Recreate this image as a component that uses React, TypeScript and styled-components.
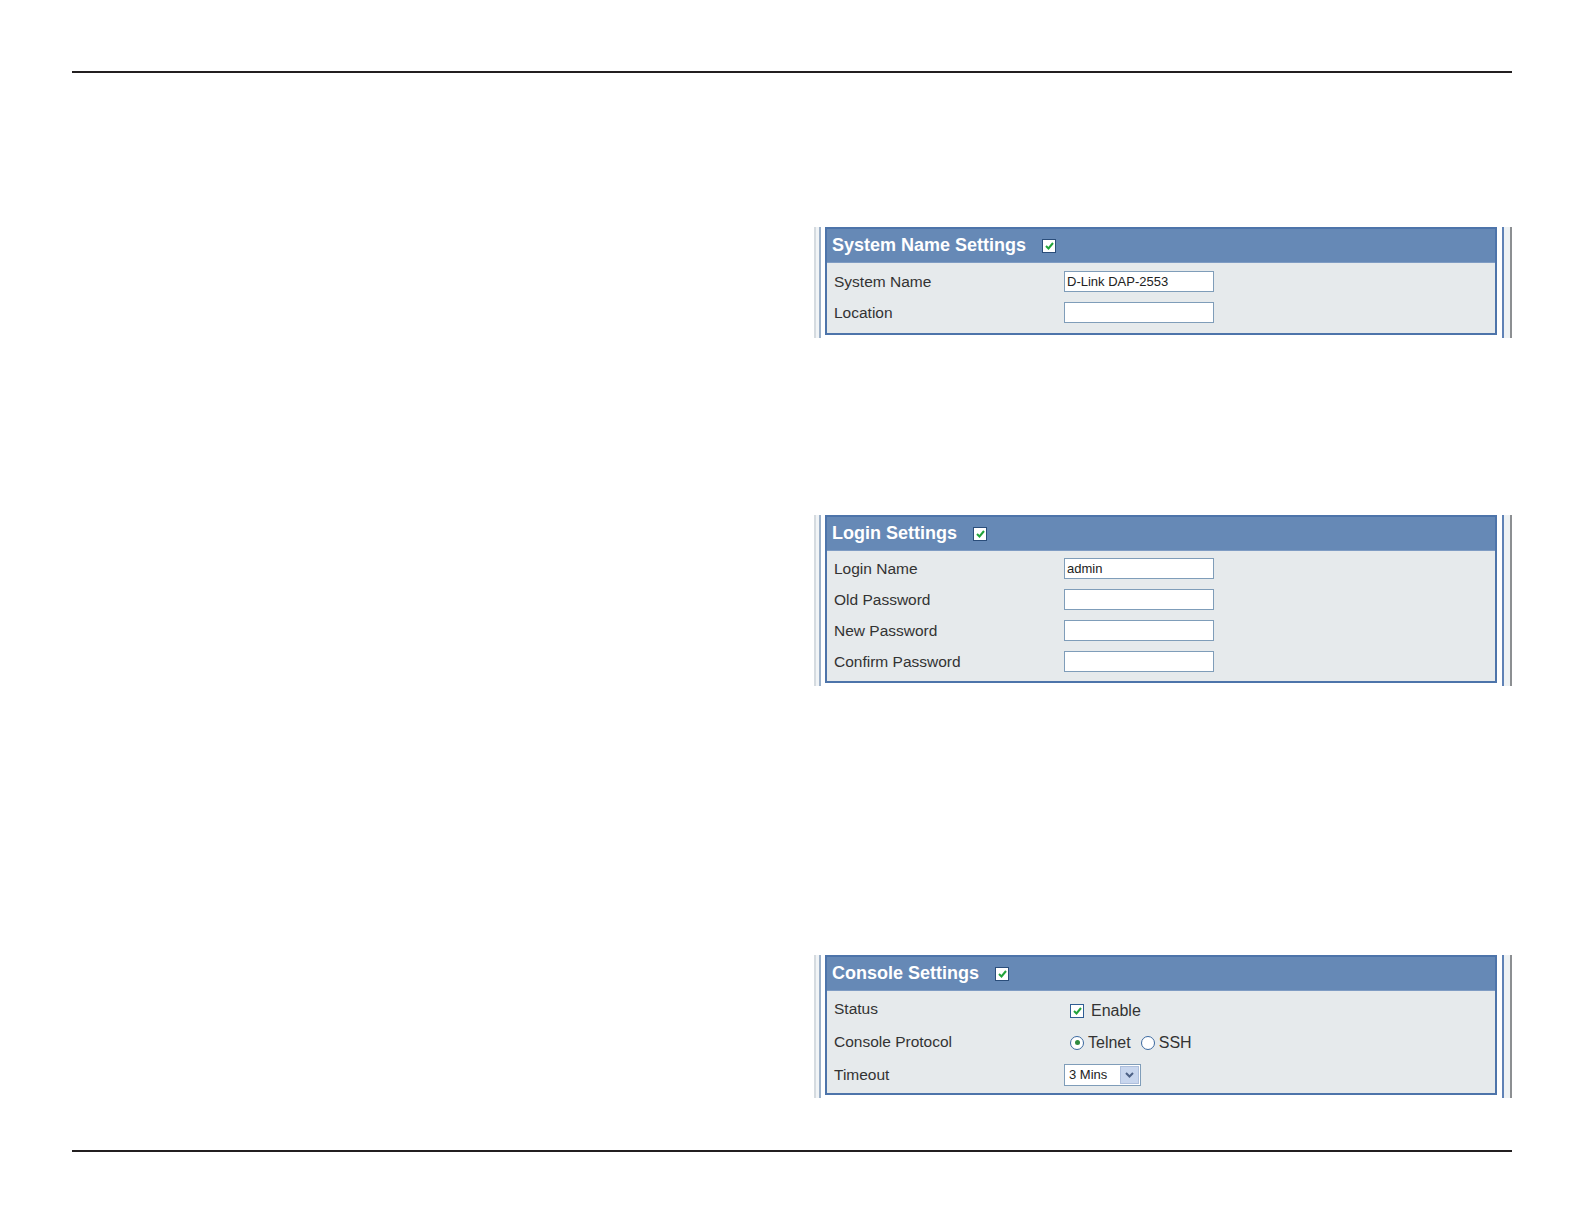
import React from 'react';
import styled, { createGlobalStyle } from 'styled-components';

const GlobalStyle = createGlobalStyle`
  body {
    margin: 0;
    background: #ffffff;
    font-family: "Liberation Sans", Arial, sans-serif;
  }

  * {
    box-sizing: border-box;
  }
`;

const CheckMark: React.FC = () => (
  <svg width="9" height="8" viewBox="0 0 9 8">
    <path d="M1 4 L3.5 6.5 L8 1" fill="none" stroke="#21a33a" strokeWidth="2" />
  </svg>
);

const App: React.FC = () => {
  return (
    <>
      <GlobalStyle />
      <Page>
        <Rule />
        <Column>
          <Frame $top={154}>
            <LeftRail />
            <Panel>
              <PanelHeader>
                <Title>System Name Settings</Title>
                <Box $header>
                  <CheckMark />
                </Box>
              </PanelHeader>
              <Body $top={3} $bottom={5}>
                <Row $h={31}>
                  <Label>System Name</Label>
                  <TextBox value="D-Link DAP-2553" readOnly />
                </Row>
                <Row $h={31}>
                  <Label>Location</Label>
                  <TextBox value="" readOnly />
                </Row>
              </Body>
            </Panel>
            <RightRail />
          </Frame>

          <Frame $top={177}>
            <LeftRail />
            <Panel>
              <PanelHeader>
                <Title>Login Settings</Title>
                <Box $header>
                  <CheckMark />
                </Box>
              </PanelHeader>
              <Body $top={2} $bottom={4}>
                <Row $h={31}>
                  <Label>Login Name</Label>
                  <TextBox value="admin" readOnly />
                </Row>
                <Row $h={31}>
                  <Label>Old Password</Label>
                  <TextBox value="" readOnly />
                </Row>
                <Row $h={31}>
                  <Label>New Password</Label>
                  <TextBox value="" readOnly />
                </Row>
                <Row $h={31}>
                  <Label>Confirm Password</Label>
                  <TextBox value="" readOnly />
                </Row>
              </Body>
            </Panel>
            <RightRail />
          </Frame>

          <Frame $top={269}>
            <LeftRail />
            <Panel>
              <PanelHeader>
                <Title>Console Settings</Title>
                <Box $header>
                  <CheckMark />
                </Box>
              </PanelHeader>
              <Body $top={1} $bottom={2}>
                <Row $h={33}>
                  <Label>Status</Label>
                  <Options $shift={5}>
                    <Box>
                      <CheckMark />
                    </Box>
                    <OptionText>Enable</OptionText>
                  </Options>
                </Row>
                <Row $h={33}>
                  <Label>Console Protocol</Label>
                  <Options $shift={2}>
                    <Radio $on />
                    <OptionText $gap={4}>Telnet</OptionText>
                    <Radio />
                    <OptionText $gap={4}>SSH</OptionText>
                  </Options>
                </Row>
                <Row $h={33}>
                  <Label>Timeout</Label>
                  <Select>
                    <SelectValue>3 Mins</SelectValue>
                    <SelectButton>
                      <svg width="9" height="6" viewBox="0 0 9 6">
                        <path d="M1 1 L4.5 4.5 L8 1" fill="none" stroke="#4d6185" strokeWidth="2" />
                      </svg>
                    </SelectButton>
                  </Select>
                </Row>
              </Body>
            </Panel>
            <RightRail />
          </Frame>
        </Column>
        <Rule $top={52} />
      </Page>
    </>
  );
};

const Page = styled.div`
  width: 1585px;
  height: 1225px;
  padding: 71px 73px 0 72px;
  overflow: hidden;
`;

const Rule = styled.div<{ $top?: number }>`
  height: 2px;
  margin-top: ${(p) => p.$top ?? 0}px;
  background: #231f20;
`;

const Column = styled.div`
  margin-left: 742px;
  display: flex;
  flex-direction: column;
`;

const Frame = styled.section<{ $top: number }>`
  margin-top: ${(p) => p.$top}px;
  display: flex;
  align-items: stretch;
`;

const LeftRail = styled.div`
  width: 7px;
  margin-right: 4px;
  border-left: 2px solid #d5dbe0;
  border-right: 2px solid #9db1c9;
  background: #f1f4f6;
`;

const RightRail = styled.div`
  width: 10px;
  margin-left: 5px;
  border-left: 2px solid #5f82b6;
  border-right: 2px solid #8c8f92;
  background: #eef2f4;
`;

const Panel = styled.div`
  flex: 1;
  margin-bottom: 3px;
  border: 2px solid #4d74aa;
  background: #e6eaec;
`;

const PanelHeader = styled.div`
  height: 34px;
  padding-left: 5px;
  display: flex;
  align-items: center;
  background: #6689b6;
  border-bottom: 1px solid #7f9cc3;
`;

const Title = styled.h2`
  margin: 0;
  font-size: 18px;
  font-weight: bold;
  color: #ffffff;
`;

const Box = styled.span<{ $header?: boolean }>`
  width: 14px;
  height: 14px;
  margin-left: ${(p) => (p.$header ? 16 : 0)}px;
  display: inline-flex;
  align-items: center;
  justify-content: center;
  background: #ffffff;
  border: 1px solid ${(p) => (p.$header ? '#2a4d7a' : '#2f5d93')};
`;

const Body = styled.div<{ $top: number; $bottom: number }>`
  padding: ${(p) => p.$top}px 0 ${(p) => p.$bottom}px;
`;

const Row = styled.div<{ $h: number }>`
  height: ${(p) => p.$h}px;
  padding-left: 7px;
  display: grid;
  grid-template-columns: 230px 1fr;
  align-items: center;
`;

const Label = styled.span`
  font-size: 15.5px;
  color: #333333;
`;

const TextBox = styled.input`
  width: 150px;
  height: 21px;
  padding: 0 2px;
  border: 1px solid #7f9db9;
  background: #ffffff;
  font-family: "Liberation Sans", Arial, sans-serif;
  font-size: 13px;
  color: #222222;
  outline: none;
`;

const Options = styled.div<{ $shift: number }>`
  margin-top: ${(p) => p.$shift}px;
  padding-left: 6px;
  display: flex;
  align-items: center;
`;

const OptionText = styled.span<{ $gap?: number }>`
  margin-left: ${(p) => p.$gap ?? 7}px;
  margin-right: 10px;
  font-size: 16px;
  color: #333333;
`;

const Radio = styled.span<{ $on?: boolean }>`
  width: 14px;
  height: 14px;
  border-radius: 50%;
  border: 1px solid #3b69a0;
  background: #ffffff;
  display: inline-flex;
  align-items: center;
  justify-content: center;

  &::after {
    content: "";
    width: 5px;
    height: 5px;
    border-radius: 50%;
    background: ${(p) => (p.$on ? '#2f8a3e' : 'transparent')};
  }
`;

const Select = styled.div`
  width: 77px;
  height: 22px;
  display: flex;
  align-items: stretch;
  border: 1px solid #7f9db9;
  background: #ffffff;
`;

const SelectValue = styled.span`
  flex: 1;
  padding-left: 4px;
  display: flex;
  align-items: center;
  font-size: 13px;
  color: #222222;
`;

const SelectButton = styled.span`
  width: 19px;
  margin: 1px;
  display: flex;
  align-items: center;
  justify-content: center;
  background: #c8d6ee;
  border: 1px solid #aebfdc;
`;

export default App;
